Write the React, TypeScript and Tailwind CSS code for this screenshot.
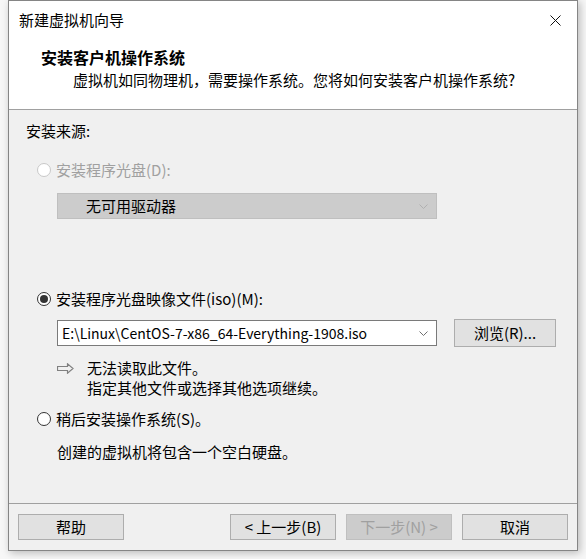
const font = { fontFamily: '"Noto Sans CJK SC", "Noto Sans", sans-serif' };

function Radio({ checked = false, disabled = false }: { checked?: boolean; disabled?: boolean }) {
  return (
    <span
      className={
        'flex h-[14px] w-[14px] items-center justify-center rounded-full border bg-white ' +
        (disabled ? 'border-[#c8c8c8]' : 'border-[#333333]')
      }
    >
      {checked && <span className="h-[8px] w-[8px] rounded-full bg-[#333333]" />}
    </span>
  );
}

function Chevron({ color }: { color: string }) {
  return (
    <svg width="9" height="5" viewBox="0 0 9 5" fill="none">
      <path d="M0.5 0.5 L4.5 4.5 L8.5 0.5" stroke={color} strokeWidth="1" />
    </svg>
  );
}

function Button({ label, disabled = false }: { label: string; disabled?: boolean }) {
  return (
    <button
      className={
        'flex h-[26px] w-[106px] items-center justify-center border text-[15px] ' +
        (disabled
          ? 'border-[#bfbfbf] bg-[#cccccc] text-[#a0a0a0]'
          : 'border-[#adadad] bg-[#e1e1e1] text-black')
      }
    >
      {label}
    </button>
  );
}

export default function App() {
  return (
    <div className="h-[559px] w-[586px] overflow-hidden bg-[#f7f7f7]" style={font}>
      <div className="ml-[8px] flex h-[551px] w-[570px] flex-col border border-[#858585] bg-[#f0f0f0] shadow-[2px_2px_8px_rgba(0,0,0,0.25)]">
        <div className="h-[109px] border-b border-[#a0a0a0] bg-white">
          <div className="flex h-[38px] items-center justify-between pl-[10px] pr-[16px]">
            <span className="text-[15px] text-black">新建虚拟机向导</span>
            <svg width="11" height="11" viewBox="0 0 11 11">
              <path d="M0.5 0.5 L10.5 10.5 M10.5 0.5 L0.5 10.5" stroke="#111" strokeWidth="1" />
            </svg>
          </div>
          <div className="mt-[8px] pl-[32px] text-[16px] font-bold leading-[20px] text-black">
            安装客户机操作系统
          </div>
          <div className="mt-[3px] pl-[64px] text-[15px] leading-[20px] text-black">
            虚拟机如同物理机，需要操作系统。您将如何安装客户机操作系统?
          </div>
        </div>

        <div className="flex flex-1 flex-col px-[17px] pt-[11px] text-[15px] text-black">
          <div className="leading-[20px]">安装来源:</div>

          <div className="mt-[19px] flex h-[20px] items-center gap-[5px] pl-[11px] text-[#a0a0a0]">
            <Radio disabled />
            <span>安装程序光盘(D):</span>
          </div>
          <div className="ml-[31px] mt-[13px] flex h-[26px] w-[380px] items-center justify-between border border-[#bfbfbf] bg-[#cccccc] pl-[28px] pr-[8px]">
            <span className="text-black">无可用驱动器</span>
            <Chevron color="#b0b0b0" />
          </div>

          <div className="mt-[70px] flex h-[20px] items-center gap-[5px] pl-[11px]">
            <Radio checked />
            <span>安装程序光盘映像文件(iso)(M):</span>
          </div>
          <div className="ml-[31px] mt-[10px] flex items-center gap-[17px]">
            <div className="flex h-[26px] w-[380px] items-center justify-between border border-[#7a7a7a] bg-white pl-[4px] pr-[8px]">
              <span className="text-[14px]">E:\Linux\CentOS-7-x86_64-Everything-1908.iso</span>
              <Chevron color="#707070" />
            </div>
            <div className="h-[28px]">
              <button className="flex h-[28px] w-[102px] items-center justify-center border border-[#adadad] bg-[#e1e1e1] text-[15px]">
                浏览(R)...
              </button>
            </div>
          </div>
          <div className="ml-[31px] mt-[11px] flex gap-[13px]">
            <div className="flex h-[20px] items-center">
              <svg width="17" height="11" viewBox="0 0 17 11" fill="none">
                <path d="M0.5 3.5 H10.5 V0.8 L16 5.5 L10.5 10.2 V7.5 H0.5 Z" stroke="#808080" strokeWidth="1.2" strokeLinejoin="miter" />
              </svg>
            </div>
            <div className="leading-[20px]">
              <div>无法读取此文件。</div>
              <div>指定其他文件或选择其他选项继续。</div>
            </div>
          </div>

          <div className="mt-[11px] flex h-[20px] items-center gap-[5px] pl-[11px]">
            <Radio />
            <span>稍后安装操作系统(S)。</span>
          </div>
          <div className="ml-[31px] mt-[13px] leading-[20px]">创建的虚拟机将包含一个空白硬盘。</div>
        </div>

        <div className="h-[47px] border-t border-[#a0a0a0] pt-[10px]">
          <div className="flex items-center px-[9px]">
            <Button label="帮助" />
            <div className="ml-auto flex gap-[10px]">
              <Button label="< 上一步(B)" />
              <Button label="下一步(N) >" disabled />
            </div>
            <div className="ml-[10px]">
              <Button label="取消" />
            </div>
          </div>
        </div>
      </div>
    </div>
  );
}
